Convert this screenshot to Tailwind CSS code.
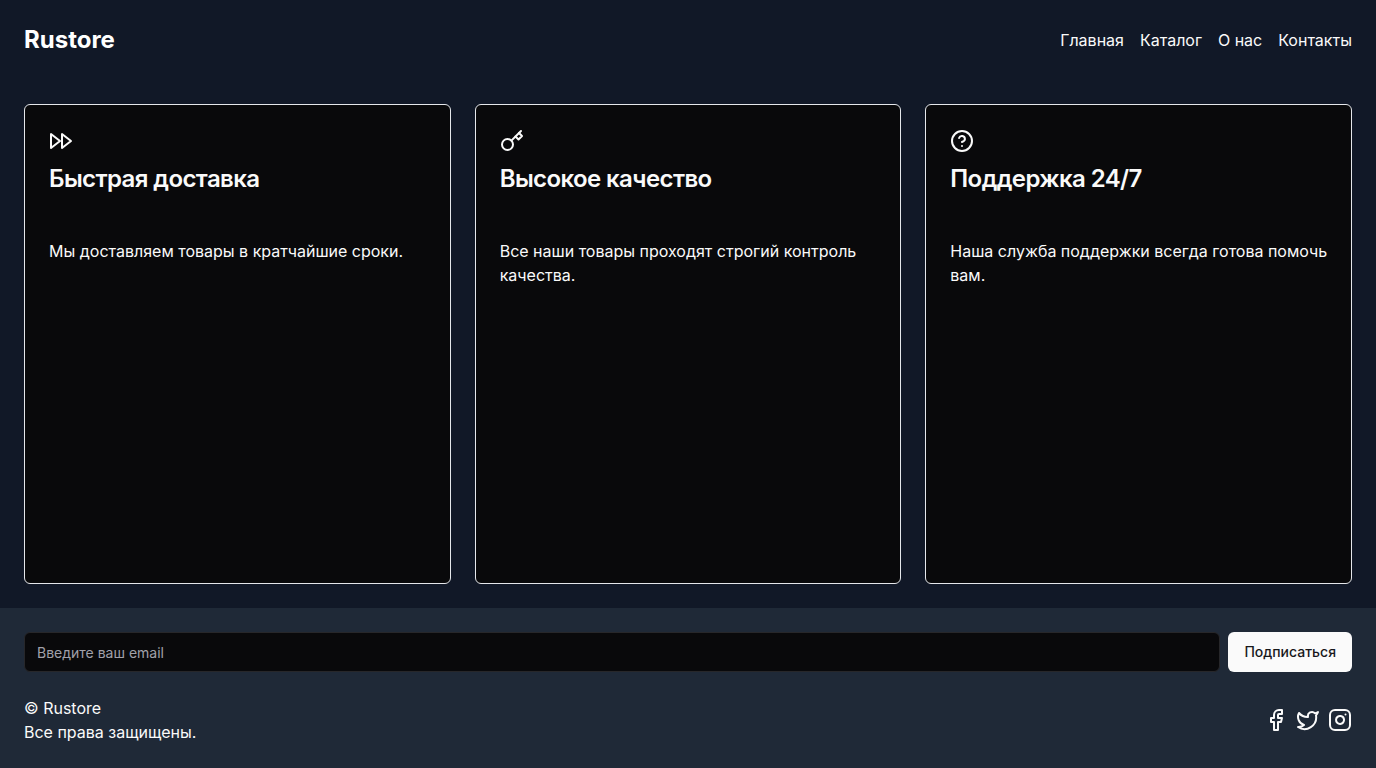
<!DOCTYPE html>
<html lang="ru">
<head>
<meta charset="utf-8">
<meta name="viewport" content="width=device-width, initial-scale=1">
<title>Rustore</title>
<script src="https://cdn.jsdelivr.net/npm/@tailwindcss/browser@4"></script>
</head>
<body class="flex min-h-screen flex-col bg-[#111827] font-['Inter',sans-serif] text-base text-[#fafafa]">
<header class="flex items-center justify-between p-6">
  <h1 class="text-2xl font-bold text-white">Rustore</h1>
  <nav class="flex gap-4">
    <a href="#">Главная</a>
    <a href="#">Каталог</a>
    <a href="#">О нас</a>
    <a href="#">Контакты</a>
  </nav>
</header>
<main class="grid flex-1 grid-cols-3 gap-6 p-6">
  <section class="rounded-md border border-gray-200 bg-[#09090b]">
    <div class="flex flex-col gap-[14px] p-6">
      <svg class="size-6" viewBox="0 0 24 24" fill="none" stroke="currentColor" stroke-width="2" stroke-linecap="round" stroke-linejoin="round" aria-hidden="true"><polygon points="13 19 22 12 13 5 13 19"/><polygon points="2 19 11 12 2 5 2 19"/></svg>
      <h2 class="text-2xl leading-6 font-semibold tracking-tight">Быстрая доставка</h2>
    </div>
    <p class="py-6 pr-5 pl-6">Мы доставляем товары в кратчайшие сроки.</p>
  </section>
  <section class="rounded-md border border-gray-200 bg-[#09090b]">
    <div class="flex flex-col gap-[14px] p-6">
      <svg class="size-6" viewBox="0 0 24 24" fill="none" stroke="currentColor" stroke-width="2" stroke-linecap="round" stroke-linejoin="round" aria-hidden="true"><circle cx="7.5" cy="15.5" r="5.5"/><path d="m21 2-9.600 9.600"/><path d="m15.500 7.500 3 3L22 7l-3-3"/></svg>
      <h2 class="text-2xl leading-6 font-semibold tracking-tight">Высокое качество</h2>
    </div>
    <p class="py-6 pr-5 pl-6">Все наши товары проходят строгий контроль качества.</p>
  </section>
  <section class="rounded-md border border-gray-200 bg-[#09090b]">
    <div class="flex flex-col gap-[14px] p-6">
      <svg class="size-6" viewBox="0 0 24 24" fill="none" stroke="currentColor" stroke-width="2" stroke-linecap="round" stroke-linejoin="round" aria-hidden="true"><circle cx="12" cy="12" r="10"/><path d="M9.090 9a3 3 0 0 1 5.830 1c0 2-3 3-3 3"/><path d="M12 17h.01"/></svg>
      <h2 class="text-2xl leading-6 font-semibold tracking-tight">Поддержка 24/7</h2>
    </div>
    <p class="py-6 pr-5 pl-6">Наша служба поддержки всегда готова помочь вам.</p>
  </section>
</main>
<footer class="flex flex-col gap-6 bg-[#1f2937] p-6">
  <form class="flex gap-2">
    <input type="email" aria-label="Email" placeholder="Введите ваш email" class="h-10 min-w-0 flex-1 rounded-md border border-[#27272a] bg-[#09090b] px-3 text-sm placeholder:text-[#a1a1aa]">
    <button type="button" class="h-10 rounded-md bg-[#fafafa] px-4 text-sm font-medium text-[#18181b]">Подписаться</button>
  </form>
  <div class="flex items-center justify-between">
    <div><p>© Rustore</p><p>Все права защищены.</p></div>
    <div class="flex gap-2">
      <a href="#" aria-label="Facebook"><svg class="size-6" viewBox="0 0 24 24" fill="none" stroke="currentColor" stroke-width="2" stroke-linecap="round" stroke-linejoin="round"><path d="M18 2h-3a5 5 0 0 0-5 5v3H7v4h3v8h4v-8h3l1-4h-4V7a1 1 0 0 1 1-1h3z"/></svg></a>
      <a href="#" aria-label="Twitter"><svg class="size-6" viewBox="0 0 24 24" fill="none" stroke="currentColor" stroke-width="2" stroke-linecap="round" stroke-linejoin="round"><path d="M22 4s-.7 2.100-2 3.400c1.600 10-9.400 17.300-18 11.600 2.200.1 4.400-.6 6-2C3 15.500.5 9.600 3 5c2.200 2.600 5.600 4.100 9 4-.9-4.200 4-6.600 7-3.800 1.100 0 3-1.200 3-1.200z"/></svg></a>
      <a href="#" aria-label="Instagram"><svg class="size-6" viewBox="0 0 24 24" fill="none" stroke="currentColor" stroke-width="2" stroke-linecap="round" stroke-linejoin="round"><rect width="20" height="20" x="2" y="2" rx="5"/><path d="M16 11.370A4 4 0 1 1 12.630 8 4 4 0 0 1 16 11.370z"/><path d="M17.500 6.500h.01"/></svg></a>
    </div>
  </div>
</footer>
</body>
</html>
